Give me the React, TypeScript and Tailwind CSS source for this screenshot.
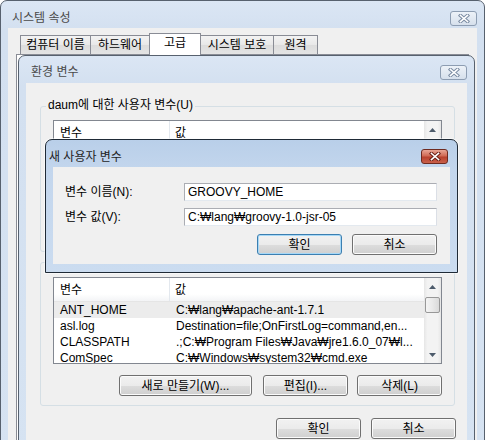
import React from "react"

const btnBase =
  "h-[21px] flex items-center justify-center rounded-[3px] border bg-[linear-gradient(to_bottom,#f2f2f2_0%,#ebebeb_50%,#dddddd_51%,#cfcfcf_100%)]"

function Btn({ children, w = "w-[85px]", def = false }: { children?: React.ReactNode; w?: string; def?: boolean }) {
  return (
    <div
      className={[
        btnBase,
        w,
        def
          ? "border-[#3c7fb1] shadow-[inset_0_0_0_1px_#a6d8f7]"
          : "border-[#707070] shadow-[inset_0_0_0_1px_#fbfbfb]",
      ].join(" ")}
    >
      {children}
    </div>
  )
}

function CloseBtn({ active = false }: { active?: boolean }) {
  return (
    <div
      className={[
        "w-[27px] h-[15px] rounded-[3px] border flex items-center justify-center",
        active
          ? "border-[#6e2a20] bg-[linear-gradient(to_bottom,#e8a595_0%,#d06a55_45%,#b8412e_55%,#c9604a_100%)]"
          : "border-[#8d9db2] bg-[linear-gradient(to_bottom,#edf2f8,#d6e0ec)]",
      ].join(" ")}
    >
      <svg width="12" height="9" viewBox="0 0 12 9">
        <path d="M2.5 1.5 L9.5 7.5 M9.5 1.5 L2.5 7.5" stroke={active ? "#6b2118" : "#7a8ba2"} strokeWidth="3.6" strokeLinecap="square" fill="none" />
        <path d="M2.5 1.5 L9.5 7.5 M9.5 1.5 L2.5 7.5" stroke="#ffffff" strokeWidth="1.6" strokeLinecap="square" fill="none" />
      </svg>
    </div>
  )
}

function Arrow({ up }: { up?: boolean }) {
  return (
    <svg width="7" height="4" viewBox="0 0 7 4">
      <path d={up ? "M0 4 L3.5 0 L7 4 Z" : "M0 0 L3.5 4 L7 0 Z"} fill="#4d5b6b" />
    </svg>
  )
}

function ListHeader() {
  return (
    <div className="h-[24px] shrink-0 flex border-b border-[#e5e5e5] bg-[linear-gradient(to_bottom,#ffffff_0%,#ffffff_70%,#f3f4f6_100%)]">
      <div className="w-[116px] pl-[6px] flex items-center border-r border-[#e3e8ee]">변수</div>
      <div className="flex-1 pl-[5px] flex items-center">값</div>
    </div>
  )
}

function ScrollBar({ thumb = true }: { thumb?: boolean }) {
  return (
    <div className="w-[17px] flex flex-col bg-[linear-gradient(to_right,#e6e6e6,#f3f3f3_20%,#f3f3f3_80%,#e6e6e6)]">
      <div className="h-[17px] flex items-center justify-center"><Arrow up /></div>
      {thumb && (
        <div className="mt-[2px] mx-[1px] h-[16px] rounded-[2px] border border-[#989898] bg-[linear-gradient(to_right,#f4f4f4,#e9e9e9_50%,#dadada)]" />
      )}
      <div className="flex-1" />
      <div className="h-[17px] flex items-center justify-center"><Arrow /></div>
    </div>
  )
}

const sysVars = [
  ["ANT_HOME", "C:₩lang₩apache-ant-1.7.1"],
  ["asl.log", "Destination=file;OnFirstLog=command,en..."],
  ["CLASSPATH", ".;C:₩Program Files₩Java₩jre1.6.0_07₩l..."],
  ["ComSpec", "C:₩Windows₩system32₩cmd.exe"],
]

const tabs = [
  { t: "컴퓨터 이름", w: "w-[71px]" },
  { t: "하드웨어", w: "w-[60px]" },
  { t: "고급", w: "w-[52px]", sel: true },
  { t: "시스템 보호", w: "w-[74px]" },
  { t: "원격", w: "w-[45px]" },
]

export default function App() {
  return (
    <div className="relative w-[486px] h-[440px] overflow-hidden bg-white text-[12px] leading-[14px] text-black font-['Liberation_Sans','Noto_Sans_CJK_KR',sans-serif]">
      {/* 시스템 속성 */}
      <div className="absolute left-0 top-0 w-[485px] h-[480px] flex flex-col border border-[#57616e] rounded-t-[7px] bg-[linear-gradient(to_bottom,#dbe6f4,#d3e0f0_30px,#d6e3f2)]">
        <div className="h-[27px] shrink-0 flex justify-between pl-[11px] pr-[7px] pt-[10px]">
          <span className="text-[#4a4a4a]">시스템 속성</span>
          <CloseBtn />
        </div>
        <div className="mx-[7px] flex-1 bg-[#f0f0f0] flex flex-col">
          <div className="flex items-end pl-[12px] pt-[5px] relative z-10">
            {tabs.map(tab => (
              <div
                key={tab.t}
                className={[
                  "flex items-center justify-center border border-b-0 border-[#898c95] -ml-px first:ml-0 whitespace-nowrap",
                  tab.w,
                  tab.sel
                    ? "h-[22px] bg-white pb-[3px] -mb-px"
                    : "h-[19px] bg-[linear-gradient(to_bottom,#f3f3f3,#e8e8e8_50%,#dcdcdc_51%,#e4e4e4)]",
                ].join(" ")}
              >
                {tab.t}
              </div>
            ))}
          </div>
          <div className="ml-[8px] mr-[8px] flex-1 border border-[#898c95] bg-white" />
        </div>
      </div>

      {/* 환경 변수 */}
      <div className="absolute left-[18px] top-[55px] w-[457px] h-[420px] flex flex-col border border-[#57616e] rounded-t-[7px] bg-[linear-gradient(to_bottom,#dbe6f4,#d3e0f0_30px,#d6e3f2)]">
        <div className="h-[27px] shrink-0 flex justify-between pl-[12px] pr-[7px] pt-[9px]">
          <span className="text-[#4a4a4a]">환경 변수</span>
          <CloseBtn />
        </div>
        <div className="mx-[7px] flex-1 bg-[#f0f0f0] flex flex-col">
          {/* 사용자 변수 (아래쪽은 대화상자에 가려짐) */}
          <div className="relative mt-[23px] ml-[14px] mr-[12px] border border-[#d5dfe5] rounded-[3px] pt-[13px] px-[12px] pb-[8px]">
            <span className="absolute left-[5px] -top-[9px] px-[2px] bg-[#f0f0f0]">daum에 대한 사용자 변수(U)</span>
            <div className="h-[91px] flex border border-[#828790] bg-white">
              <div className="flex-1 flex flex-col">
                <ListHeader />
              </div>
              <ScrollBar thumb={false} />
            </div>
            <div className="mt-[11px] h-[21px]" />
          </div>

          {/* 시스템 변수 */}
          <div className="relative mt-[10px] ml-[14px] mr-[12px] border border-[#d5dfe5] rounded-[3px] pt-[14px] px-[12px] pb-[9px]">
            <div className="h-[87px] flex border border-[#828790] bg-white overflow-hidden">
              <div className="flex-1 flex flex-col overflow-hidden">
                <ListHeader />
                {sysVars.map(([k, v], i) => (
                  <div key={k} className={["h-[16px] shrink-0 flex items-center whitespace-nowrap", i === 0 ? "bg-[#ececec]" : ""].join(" ")}>
                    <div className="w-[116px] pl-[6px]">{k}</div>
                    <div className="flex-1 pl-[6px] overflow-hidden">{v}</div>
                  </div>
                ))}
              </div>
              <ScrollBar />
            </div>
            <div className="mt-[11px] flex justify-end">
              <Btn w="w-[133px]">새로 만들기(W)...</Btn>
              <div className="ml-[11px]"><Btn>편집(I)...</Btn></div>
              <div className="ml-[9px]"><Btn>삭제(L)</Btn></div>
            </div>
          </div>

          <div className="mt-[12px] mr-[11px] flex justify-end gap-[10px]">
            <Btn>확인</Btn>
            <Btn>취소</Btn>
          </div>
        </div>
      </div>

      {/* 새 사용자 변수 */}
      <div className="absolute left-[45px] top-[139px] w-[413px] h-[134px] flex flex-col border border-[#1f2a36] rounded-t-[7px] bg-[linear-gradient(to_bottom,#b9cfe9,#c3d6ed_30px,#cbdcf0)] shadow-[0_0_0_1px_rgba(255,255,255,0.5)]">
        <div className="h-[27px] shrink-0 flex justify-between pl-[3px] pr-[9px] pt-[9px]">
          <span className="mt-[1px] text-[#1e1e1e]">새 사용자 변수</span>
          <CloseBtn active />
        </div>
        <div className="mx-[7px] mb-[8px] flex-1 bg-[#f0f0f0] pl-[12px] pr-[13px] pt-[16px] flex flex-col">
          <div className="flex items-center">
            <span className="w-[119px]">변수 이름(N):</span>
            <div className="flex-1 h-[18px] border border-[#abadb3] border-r-[#dbdfe6] border-b-[#e3e9ef] bg-white pl-[3px] flex items-center">GROOVY_HOME</div>
          </div>
          <div className="mt-[7px] flex items-center">
            <span className="w-[119px]">변수 값(V):</span>
            <div className="flex-1 h-[18px] border border-[#abadb3] border-r-[#dbdfe6] border-b-[#e3e9ef] bg-white pl-[3px] flex items-center whitespace-nowrap">C:₩lang₩groovy-1.0-jsr-05</div>
          </div>
          <div className="mt-[8px] flex justify-end gap-[10px]">
            <Btn def>확인</Btn>
            <Btn>취소</Btn>
          </div>
        </div>
      </div>
    </div>
  )
}
